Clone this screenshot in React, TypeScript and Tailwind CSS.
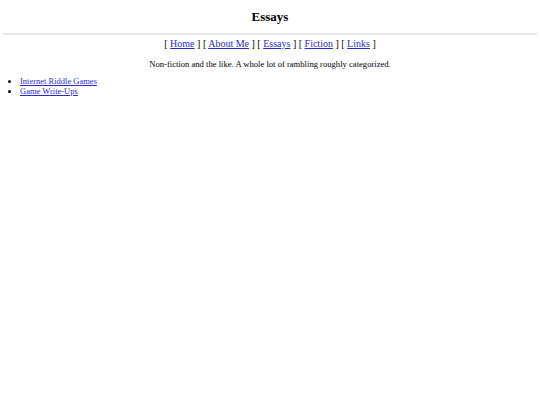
export default function App() {
  const serif = { fontFamily: '"Liberation Serif", "Times New Roman", serif' };
  return (
    <div className="min-h-[405px] bg-white px-[3px] pt-[1px] text-black" style={serif}>
      <h2 className="mt-[8px] mb-[9px] text-center text-[13px] font-bold leading-[15px]">Essays</h2>
      <div className="h-[2px] w-full bg-[#e4e4e4]" />
      <div className="mt-[3px] text-center text-[10px] leading-[12px]">
        [ <a href="#" className="text-[#2a2acc] underline">Home</a> ] [ <a href="#" className="text-[#2a2acc] underline">About Me</a> ] [ <a href="#" className="text-[#2a2acc] underline">Essays</a> ] [ <a href="#" className="text-[#2a2acc] underline">Fiction</a> ] [ <a href="#" className="text-[#2a2acc] underline">Links</a> ]
      </div>
      <p className="mt-[9px] text-center text-[8.6px] leading-[10px]">
        Non-fiction and the like. A whole lot of rambling roughly categorized.
      </p>
      <ul className="mt-[7px] list-disc pl-[17px] text-[8.5px] leading-[10px]">
        <li><a href="#" className="text-[#2a2acc] underline">Internet Riddle Games</a></li>
        <li><a href="#" className="text-[#2a2acc] underline">Game Write-Ups</a></li>
      </ul>
    </div>
  );
}
